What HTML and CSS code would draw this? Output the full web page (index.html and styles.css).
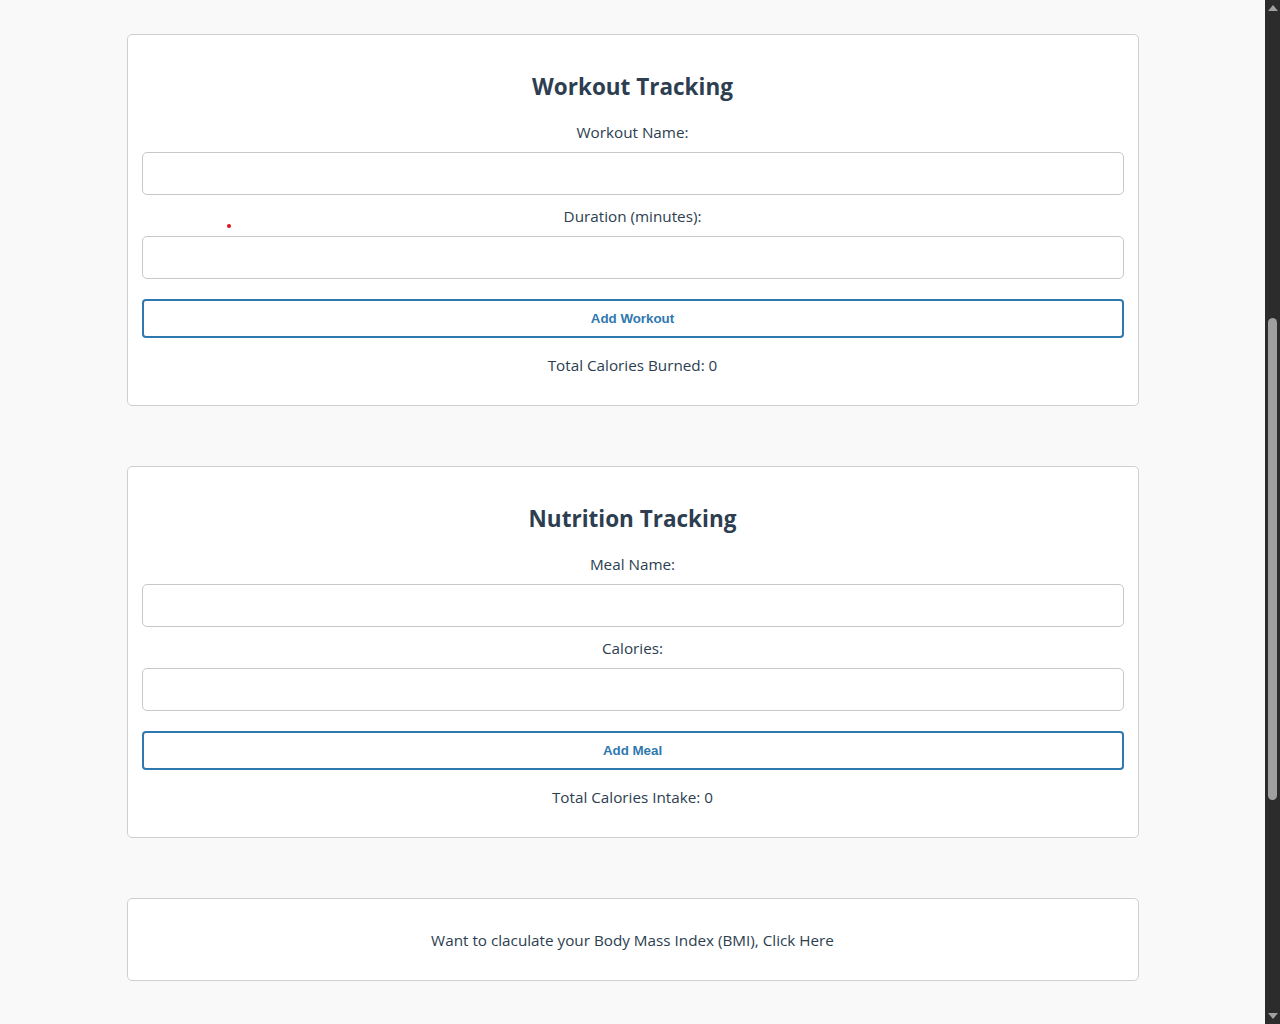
FILE: index.html
```html
<!DOCTYPE html>
<html lang="en">
<head>
<meta charset="utf-8">
<title>Fitness Tracker</title>
<link rel="stylesheet" href="styles.css">
</head>
<body>
<div class="page">
  <main class="content">
    <section class="card">
      <h2 class="card-title">Workout Tracking</h2>
      <label class="field-label" for="workout-name">Workout Name:</label>
      <input class="field-input" id="workout-name" type="text">
      <label class="field-label" for="workout-duration">Duration (minutes):</label>
      <input class="field-input" id="workout-duration" type="number">
      <button class="btn" type="button">Add Workout</button>
      <p class="total">Total Calories Burned: 0</p>
      <span class="pointer-dot"></span>
    </section>

    <section class="card">
      <h2 class="card-title">Nutrition Tracking</h2>
      <label class="field-label" for="meal-name">Meal Name:</label>
      <input class="field-input" id="meal-name" type="text">
      <label class="field-label" for="meal-calories">Calories:</label>
      <input class="field-input" id="meal-calories" type="number">
      <button class="btn" type="button">Add Meal</button>
      <p class="total">Total Calories Intake: 0</p>
    </section>

    <section class="card card-link">
      <p class="link-text">Want to claculate your Body Mass Index (BMI), Click Here</p>
    </section>
  </main>
  <div class="scrollbar" aria-hidden="true">
    <span class="sb-arrow sb-up"></span>
    <div class="sb-track">
      <span class="sb-thumb"></span>
    </div>
    <span class="sb-arrow sb-down"></span>
  </div>
</div>
</body>
</html>
```
FILE: styles.css
```css
* { box-sizing: border-box; }

html, body {
  margin: 0;
  height: 1024px;
  overflow: hidden;
}

body {
  background: #f9f9f9;
  font-family: "Open Sans", "Noto Sans", sans-serif;
  color: #2c3e50;
}

.page {
  display: flex;
  height: 1024px;
}

.content {
  flex: 1;
  padding-top: 34px;
  display: flex;
  flex-direction: column;
  align-items: center;
  gap: 60px;
}

.card {
  position: relative;
  width: 80%;
  background: #fff;
  border: 1px solid #cfcfcf;
  border-radius: 5px;
  padding: 20px 14px 30px;
  display: flex;
  flex-direction: column;
  text-align: center;
}

.card-title {
  margin: 17px 0 21px;
  font-size: 22.5px;
  line-height: 29px;
  font-weight: 700;
  color: #2c3e50;
}

.field-label {
  display: block;
  font-size: 15.25px;
  line-height: 20px;
  margin-bottom: 10px;
  color: #2c3e50;
}

.field-input {
  width: 100%;
  height: 43px;
  border: 1px solid #c8c8c8;
  border-radius: 5px;
  padding: 10px;
  font-size: 16px;
  background: #fff;
  margin: 0 0 11px;
}

.field-input + .field-label + .field-input {
  margin-bottom: 20px;
}

.btn {
  width: 100%;
  height: 39px;
  border: 2px solid #2f78b0;
  border-radius: 4px;
  background: #fff;
  color: #2f78b0;
  font-family: "Liberation Sans", Arial, sans-serif;
  font-weight: 700;
  font-size: 13.333px;
  cursor: pointer;
}

.total {
  margin: 17px 0 0;
  font-size: 15.25px;
  line-height: 20px;
}

.pointer-dot {
  position: absolute;
  left: 99px;
  top: 189px;
  width: 4px;
  height: 4px;
  border-radius: 50%;
  background: #d9141b;
}

.card-link {
  padding: 31px 14px 30px;
}

.link-text {
  margin: 0;
  font-size: 15.25px;
  line-height: 20px;
}

/* scrollbar column */
.scrollbar {
  width: 15px;
  height: 1024px;
  background: #2c2c2c;
  display: flex;
  flex-direction: column;
  align-items: center;
}

.sb-arrow {
  width: 0;
  height: 0;
  border-left: 5px solid transparent;
  border-right: 5px solid transparent;
}

.sb-up {
  margin: 5px 0 4px;
  border-bottom: 6px solid #a0a0a0;
}

.sb-down {
  margin: 4px 0 5px;
  border-top: 6px solid #a0a0a0;
}

.sb-track {
  flex: 1;
  width: 100%;
  display: flex;
  justify-content: center;
  padding-top: 303px;
}

.sb-thumb {
  width: 9px;
  height: 482px;
  border-radius: 5px;
  background: #9f9f9f;
}
```
